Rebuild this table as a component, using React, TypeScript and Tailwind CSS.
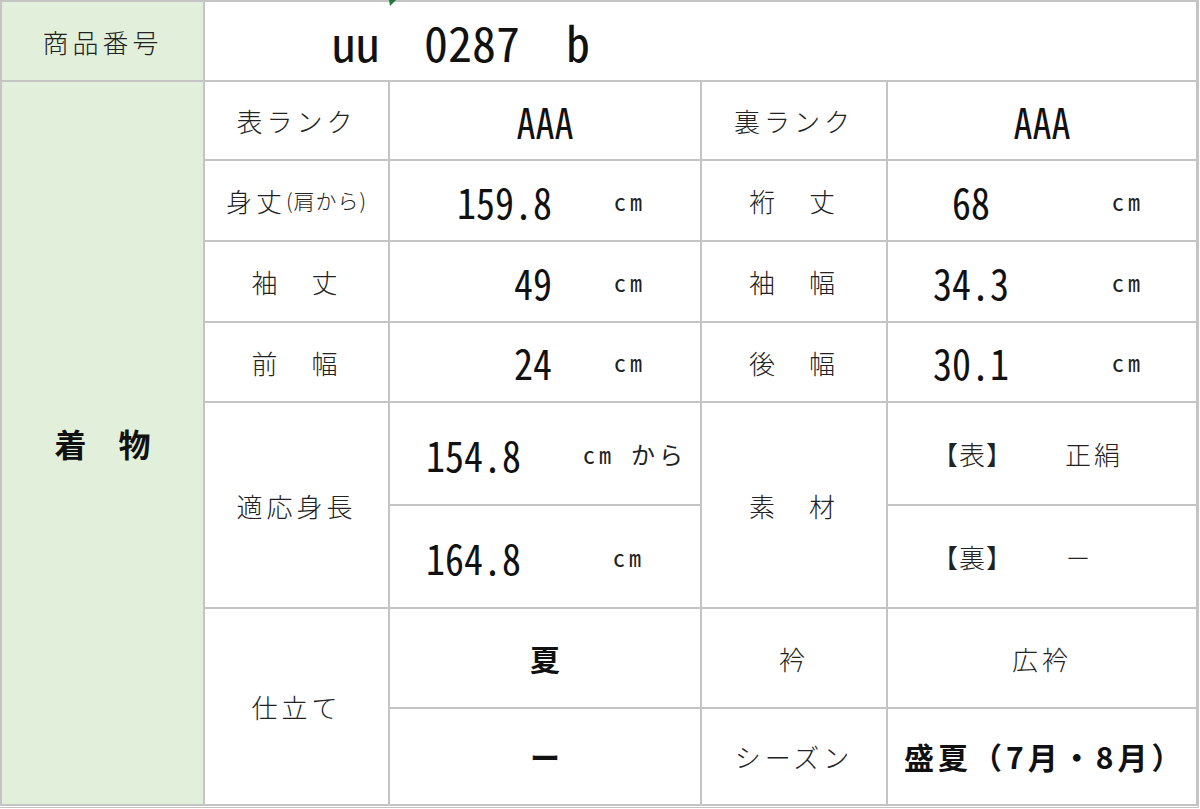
import React from "react";

const lbl = "flex items-center justify-center bg-white text-[26px] tracking-[4px] text-[#222] font-light";
const num = "inline-block text-[38px] leading-none font-normal text-[#111] scale-y-[1.1] [font-feature-settings:'hwid']";
const unit = "text-[24px] leading-none tracking-[4px] text-[#222] [font-feature-settings:'hwid']";

function ValL({ n, u }: { n: string; u: string }) {
  return (
    <div className="flex items-center bg-white">
      <span className={`${num} w-[162px] text-right`}>{n}</span>
      <span className={`${unit} ml-[62px]`}>{u}</span>
    </div>
  );
}

function ValR({ n, u }: { n: string; u: string }) {
  return (
    <div className="flex items-center bg-white">
      <span className={`${num} w-[166px] text-center`}>{n}</span>
      <span className={`${unit} ml-[58px]`}>{u}</span>
    </div>
  );
}

export default function App() {
  return (
    <div className="relative w-[1200px] h-[809px] bg-white font-['Noto_Sans_CJK_JP',sans-serif] overflow-hidden">
      <div className="w-[1199px] h-[808px] border-r border-b border-[#c4c4c4] bg-white">
        <div className="grid w-[1198px] bg-[#c4c4c4] p-[2px] gap-[2px] grid-cols-[201px_183px_310px_184px_308px] grid-rows-[78px_77px_79px_79px_78px_101px_101px_98px_95px]">
          <div className="col-start-1 row-start-1 flex items-center justify-center bg-[#e2efda] text-[26px] tracking-[4px] text-[#222] font-light">
            商品番号
          </div>
          <div className="col-start-2 col-span-4 row-start-1 flex items-center bg-white pl-[127px] text-[48px] leading-none text-[#111] [font-feature-settings:'hwid']">
            <span>uu</span>
            <span className="ml-[44px]">0287</span>
            <span className="ml-[46px]">b</span>
          </div>
          <div className="col-start-1 row-start-2 row-span-8 flex items-center justify-center bg-[#e2efda] text-[32px] font-bold text-[#111]">
            着　物
          </div>

          <div className={`col-start-2 row-start-2 ${lbl}`}>表ランク</div>
          <div className="col-start-3 row-start-2 flex items-center justify-center bg-white">
            <span className={num}>AAA</span>
          </div>
          <div className={`col-start-4 row-start-2 ${lbl}`}>裏ランク</div>
          <div className="col-start-5 row-start-2 flex items-center justify-center bg-white">
            <span className={num}>AAA</span>
          </div>

          <div className="col-start-2 row-start-3 flex items-center justify-center bg-white text-[#222] font-light">
            <span className="text-[26px] tracking-[4px]">身丈</span>
            <span className="text-[21px] tracking-[1px]">(肩から)</span>
          </div>
          <div className="col-start-3 row-start-3 grid">
            <ValL n="159.8" u="cm" />
          </div>
          <div className={`col-start-4 row-start-3 ${lbl}`}>裄　丈</div>
          <div className="col-start-5 row-start-3 grid">
            <ValR n="68" u="cm" />
          </div>

          <div className={`col-start-2 row-start-4 ${lbl}`}>袖　丈</div>
          <div className="col-start-3 row-start-4 grid">
            <ValL n="49" u="cm" />
          </div>
          <div className={`col-start-4 row-start-4 ${lbl}`}>袖　幅</div>
          <div className="col-start-5 row-start-4 grid">
            <ValR n="34.3" u="cm" />
          </div>

          <div className={`col-start-2 row-start-5 ${lbl}`}>前　幅</div>
          <div className="col-start-3 row-start-5 grid">
            <ValL n="24" u="cm" />
          </div>
          <div className={`col-start-4 row-start-5 ${lbl}`}>後　幅</div>
          <div className="col-start-5 row-start-5 grid">
            <ValR n="30.1" u="cm" />
          </div>

          <div className={`col-start-2 row-start-6 row-span-2 ${lbl}`}>適応身長</div>
          <div className="col-start-3 row-start-6 flex items-center bg-white pl-[36px]">
            <span className={num}>154.8</span>
            <span className={`${unit} ml-[62px] tracking-[2px]`}>cm から</span>
          </div>
          <div className={`col-start-4 row-start-6 row-span-2 ${lbl}`}>素　材</div>
          <div className="col-start-5 row-start-6 flex items-center bg-white pl-[44px] text-[26px] text-[#222] font-light">
            <span className="tracking-[1px]">【表】</span>
            <span className="ml-[52px] tracking-[3px]">正絹</span>
          </div>
          <div className="col-start-3 row-start-7 flex items-center bg-white pl-[36px]">
            <span className={num}>164.8</span>
            <span className={`${unit} ml-[92px]`}>cm</span>
          </div>
          <div className="col-start-5 row-start-7 flex items-center bg-white pl-[44px] text-[26px] text-[#222] font-light">
            <span className="tracking-[1px]">【裏】</span>
            <span className="ml-[52px]">－</span>
          </div>

          <div className={`col-start-2 row-start-8 row-span-2 ${lbl}`}>仕立て</div>
          <div className="col-start-3 row-start-8 flex items-center justify-center bg-white text-[30px] font-bold text-[#111]">
            夏
          </div>
          <div className={`col-start-4 row-start-8 ${lbl}`}>衿</div>
          <div className={`col-start-5 row-start-8 ${lbl}`}>広衿</div>
          <div className="col-start-3 row-start-9 flex items-center justify-center bg-white text-[30px] font-bold text-[#111]">
            ー
          </div>
          <div className={`col-start-4 row-start-9 ${lbl}`}>シーズン</div>
          <div className="col-start-5 row-start-9 flex items-center bg-white pl-[16px] text-[30px] font-bold text-[#111] tracking-[4px]">
            盛夏（7月・8月）
          </div>
        </div>
      </div>
      <svg className="absolute left-[388px] top-0" width="9" height="7" viewBox="0 0 9 7">
        <polygon points="1,0 8,0 2,6" fill="#217a36" />
      </svg>
    </div>
  );
}
